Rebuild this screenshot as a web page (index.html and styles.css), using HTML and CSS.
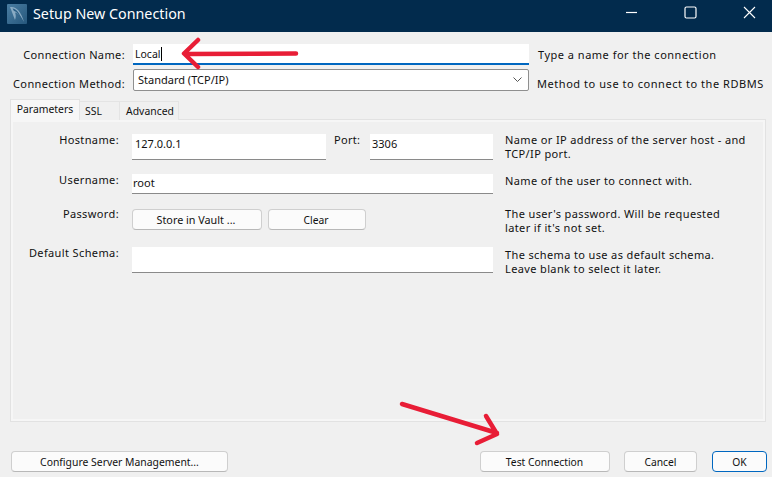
FILE: index.html
```html
<!DOCTYPE html>
<html lang="en">
<head>
<meta charset="utf-8">
<title>Setup New Connection</title>
<link rel="stylesheet" href="styles.css">
</head>
<body>
<div class="window">
  <header class="titlebar">
    <svg class="app-icon" viewBox="0 0 20 20" width="20" height="20">
      <defs><linearGradient id="ai" x1="0" y1="0" x2="1" y2="1"><stop offset="0" stop-color="#4a7ea3"/><stop offset="1" stop-color="#26577c"/></linearGradient></defs>
      <rect width="20" height="20" rx="1" fill="url(#ai)"/>
      <path d="M3 3C9 2 14 7 17 18C14 12 11 9 8 8.500C9 11 9 13 8 16C6.500 12 5 8 3 3Z" fill="#9dbacf" opacity=".8"/>
      <path d="M5.500 4.500C9.500 5 12.500 9 14.500 15C11.500 10 9.500 7.500 7 7Z" fill="#2b5f86"/>
    </svg>
    <h1 class="title">Setup New Connection</h1>
    <div class="controls">
      <svg class="ctl" viewBox="0 0 13 13" width="13" height="13"><path d="M1 6.500H12" stroke="#fff" stroke-width="1.200" fill="none"/></svg>
      <svg class="ctl" viewBox="0 0 13 13" width="13" height="13"><rect x="1" y="1" width="11" height="11" rx="1.500" stroke="#fff" stroke-width="1.200" fill="none"/></svg>
      <svg class="ctl" viewBox="0 0 13 13" width="13" height="13"><path d="M1 1L12 12M12 1L1 12" stroke="#fff" stroke-width="1.100" fill="none"/></svg>
    </div>
  </header>

  <main class="content">
    <div class="top-row name-row">
      <label class="top-label">Connection Name:</label>
      <div class="field field-name"><span class="typed">Local</span></div>
      <p class="top-help">Type a name for the connection</p>
    </div>
    <div class="top-row method-row">
      <label class="top-label">Connection Method:</label>
      <div class="field field-select">
        <span class="select-value">Standard (TCP/IP)</span>
        <svg viewBox="0 0 9 6" width="9" height="6"><path d="M.5 .5L4.500 4.500L8.500 .5" stroke="#555" fill="none"/></svg>
      </div>
      <p class="top-help">Method to use to connect to the RDBMS</p>
    </div>

    <nav class="tabs">
      <div class="tab tab-active">Parameters</div>
      <div class="tab tab-ssl">SSL</div>
      <div class="tab tab-adv">Advanced</div>
    </nav>

    <section class="panel">
      <div class="row row-host">
        <label class="label">Hostname:</label>
        <div class="pair">
          <div class="field field-host">127.0.0.1</div>
          <label class="port-label">Port:</label>
          <div class="field field-port">3306</div>
        </div>
        <p class="help">Name or IP address of the server host - and<br>TCP/IP port.</p>
      </div>
      <div class="row row-user">
        <label class="label">Username:</label>
        <div class="pair"><div class="field field-user">root</div></div>
        <p class="help">Name of the user to connect with.</p>
      </div>
      <div class="row row-pass">
        <label class="label">Password:</label>
        <div class="pair">
          <button class="btn btn-vault">Store in Vault ...</button>
          <button class="btn btn-clear">Clear</button>
        </div>
        <p class="help">The user's password. Will be requested<br>later if it's not set.</p>
      </div>
      <div class="row row-schema">
        <label class="label">Default Schema:</label>
        <div class="pair"><div class="field field-schema"></div></div>
        <p class="help">The schema to use as default schema.<br>Leave blank to select it later.</p>
      </div>
    </section>

    <footer class="footer">
      <button class="btn btn-config">Configure Server Management...</button>
      <div class="footer-right">
        <button class="btn btn-test">Test Connection</button>
        <button class="btn btn-cancel">Cancel</button>
        <button class="btn btn-ok">OK</button>
      </div>
    </footer>
  </main>

  <svg class="arrows" viewBox="0 0 772 477" width="772" height="477">
    <g stroke="#e81d36" stroke-width="4.500" stroke-linecap="round" stroke-linejoin="round" fill="none">
      <path d="M296 53.500L185 54M198 40L184 53.500L198 67"/>
      <path d="M402 404L497 433M486 416L497 434L477 443"/>
    </g>
  </svg>
</div>
</body>
</html>
```
FILE: styles.css
```css
* { box-sizing: border-box; }
html, body { margin: 0; padding: 0; }
body {
  width: 772px;
  height: 477px;
  overflow: hidden;
  font-family: "Noto Sans", "Open Sans", sans-serif;
  font-size: 11px;
  color: #111;
  background: #f0f0f0;
}
.window { position: relative; width: 772px; height: 477px; }

.titlebar {
  display: flex;
  align-items: center;
  height: 32px;
  padding-left: 7px;
  background: #022b4d;
  color: #fff;
}
.app-icon { margin-top: -4px; }
.title { margin: -6px 0 0 6px; font-size: 14.300px; font-weight: 400; }
.controls { display: flex; margin-left: auto; margin-top: -7px; padding-right: 16px; gap: 46px; }
.ctl { display: block; }

.content { padding-top: 12px; }
.top-row { display: flex; align-items: center; }
.name-row { height: 21px; }
.method-row { height: 22px; margin-top: 4px; }
.top-label { width: 125px; text-align: right; letter-spacing: .38px; }
.name-row .top-label { margin-top: -1px; }
.method-row .top-label { margin-top: 7px; }
.top-help { margin: 0; letter-spacing: .5px; }
.name-row .top-help { margin: -1px 0 0 9px; }
.method-row .top-help { margin: 7px 0 0 8px; letter-spacing: .55px; }

.field { background: #fff; border-bottom: 1px solid #8a8a8a; line-height: 18px; }
.field-name {
  width: 396px;
  height: 21px;
  margin-left: 8px;
  padding-left: 2px;
  line-height: 20px;
  font-size: 10.500px;
  border-bottom: 2px solid #0067c0;
}
.typed { display: inline-block; height: 14px; line-height: 14px; border-right: 1px solid #000; }
.field-select {
  display: flex;
  align-items: center;
  justify-content: space-between;
  width: 396px;
  height: 22px;
  margin-left: 8px;
  padding: 0 6px 0 4px;
  border: 1px solid #8f8f8f;
  border-radius: 2px;
}
.select-value { font-size: 11px; }

.tabs { display: flex; align-items: flex-end; height: 21px; margin-top: 8px; padding-left: 10px; position: relative; z-index: 1; font-size: 10.400px; }
.tab {
  height: 19px;
  padding-top: 2px;
  text-align: center;
  background: #f0f0f0;
  border: 1px solid #e4e4e4;
  border-bottom: 0;
  margin-left: -1px;
}
.tab:first-child { margin-left: 0; }
.tab-active { width: 70px; height: 21px; background: #f7f7f7; border-color: #e2e2e2; }
.tab-ssl { width: 41px; padding-right: 12px; }
.tab-adv { width: 60px; padding-left: 2px; }

.panel {
  width: 756px;
  height: 303px;
  margin: -1px 0 0 10px;
  padding: 14px 0 0 0;
  border: 1px solid #e2e2e2;
  box-shadow: inset 0 0 0 2px #f6f6f6;
  background: #f0f0f0;
}
.row { display: flex; align-items: flex-start; }
.row-host { height: 26px; }
.row-user { height: 20px; margin-top: 14px; }
.row-pass { height: 21px; margin-top: 15px; }
.row-schema { height: 26px; margin-top: 17px; }
.label { width: 108px; margin-top: -1px; text-align: right; line-height: 14px; letter-spacing: .38px; }
.row-pass .label { margin-top: -2px; }
.pair { display: flex; align-items: flex-start; width: 361px; margin-left: 13px; }
.help { margin: -1px 0 0 12px; line-height: 14px; letter-spacing: .37px; }
.row-user .help { margin-top: 0; }
.row-pass .help { margin-top: -2px; }
.row-schema .help { margin-top: 1px; }

.field-host { width: 194px; height: 26px; padding: 1px 0 0 3px; }
.port-label { margin: -1px 0 0 8px; width: 36px; line-height: 14px; letter-spacing: .3px; }
.field-port { width: 123px; height: 26px; padding: 1px 0 0 2px; }
.field-user { width: 361px; height: 20px; padding-left: 1px; }
.field-schema { width: 361px; height: 26px; }

.btn {
  height: 21px;
  padding: 0;
  font: inherit;
  font-size: 10.300px;
  color: #111;
  background: #fbfbfb;
  border: 1px solid #cfcfcf;
  border-bottom-color: #b8b8b8;
  border-radius: 4px;
}
.btn-vault { width: 130px; font-size: 10.800px; padding-right: 2px; }
.btn-clear { width: 98px; margin-left: 6px; padding-right: 2px; }

.footer { display: flex; justify-content: space-between; margin-top: 29px; padding: 0 5px 0 11px; }
.footer-right { display: flex; }
.btn-config { width: 217px; font-size: 10.400px; }
.btn-test { width: 130px; padding-right: 1px; }
.btn-cancel { width: 73px; margin-left: 14px; }
.btn-ok { width: 55px; margin-left: 15px; border-color: #0067c0; }

.arrows { position: absolute; left: 0; top: 0; pointer-events: none; }
```
